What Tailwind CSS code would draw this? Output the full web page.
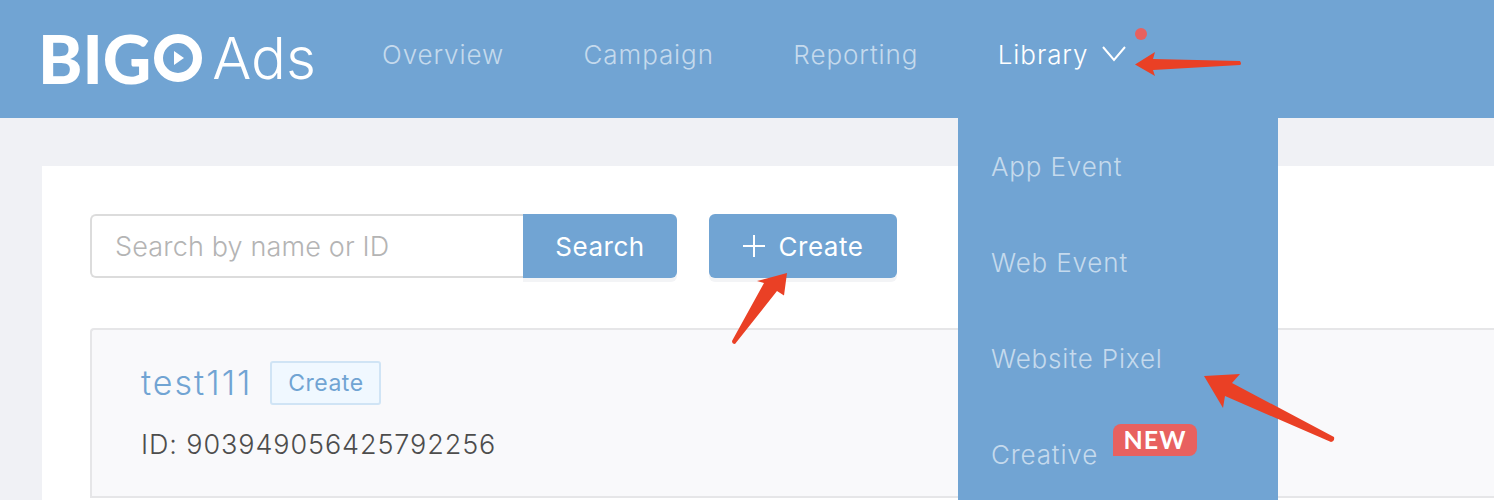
<!DOCTYPE html>
<html lang="en">
<head>
  <meta charset="UTF-8" />
  <title>BIGO Ads</title>
  <script src="https://cdn.jsdelivr.net/npm/@tailwindcss/browser@4"></script>
</head>
<body class="relative h-[500px] overflow-hidden bg-[#f0f1f5] font-['Inter',sans-serif] text-[#4d4d4d]">

  <!-- header -->
  <header class="flex h-[118px] items-center bg-[#71a4d3] pl-[42px] text-[26px] tracking-[0.9px] text-white/60">
    <div class="flex w-[340px] shrink-0 items-center pb-[2px] text-white">
      <span class="ml-[-4px] font-['Lato',sans-serif] text-[67px] leading-none font-black tracking-[0px]">BIG</span>
      <svg class="ml-[3px] h-[48px] w-[48px]" viewBox="0 0 48 48">
        <circle cx="24" cy="24" r="19.5" fill="none" stroke="#fff" stroke-width="9" />
        <path d="M20 17l10 7-10 7z" fill="#fff" />
      </svg>
      <span class="ml-[10px] text-[58px] leading-none font-light tracking-[0px]">Ads</span>
    </div>
    <nav class="flex items-center gap-[79.5px] pb-[10px] font-light">
      <a>Overview</a>
      <a>Campaign</a>
      <a>Reporting</a>
      <a class="flex items-center text-white">
        Library
        <svg class="ml-[14px] h-[16px] w-[24px]" viewBox="0 0 24 16" fill="none" stroke="#fff" stroke-width="2"><path d="M1 1l11 13L23 1" /></svg>
      </a>
    </nav>
  </header>

  <!-- content -->
  <main class="ml-[42px] mt-[48px] h-[334px] bg-white pl-[48px] pt-[48px]">
    <div class="flex items-start">
      <div class="flex h-[64px] w-[433px] items-center rounded-l-[6px] border-2 border-r-0 border-[#dcdcdc] pl-[23px] pt-[3px] text-[27px] font-light tracking-[0.15px] text-[#b4b4b4]">Search by name or ID</div>
      <button class="h-[64px] w-[154px] rounded-r-[6px] bg-[#71a4d3] text-[26px] tracking-[0.5px] text-white shadow-[0_4px_0_#f3f4f6]">Search</button>
      <button class="ml-[32px] flex h-[64px] w-[188px] items-center justify-center gap-[14px] rounded-[6px] bg-[#71a4d3] text-[26px] tracking-[0.5px] text-white shadow-[0_4px_0_#f3f4f6]">
        <svg class="h-[22px] w-[22px]" viewBox="0 0 22 22" stroke="#fff" stroke-width="2"><path d="M11 0v22M0 11h22" /></svg>
        Create
      </button>
    </div>

    <div class="mt-[50px] h-[170px] rounded-tl-[4px] border-t-2 border-b-2 border-l-2 border-[#e6e6e8] bg-[#f9f9fb] pl-[49px] pt-[31px]">
      <div class="flex items-center">
        <span class="text-[34px] leading-[44px] font-light tracking-[2px] text-[#71a4d3]">test111</span>
        <span class="ml-[18px] flex h-[44px] w-[111px] items-center justify-center rounded-[3px] border-2 border-[#d0e4f5] bg-[#f0f8ff] text-[23px] tracking-[0.5px] text-[#71a4d3]">Create</span>
      </div>
      <p class="mt-[22px] text-[27px] leading-[36px] font-light tracking-[0.9px]">ID: 903949056425792256</p>
    </div>
  </main>

  <!-- library dropdown -->
  <ul class="absolute left-[958px] top-[118px] h-[382px] w-[320px] bg-[#71a4d3] pl-[33px] text-[26px] font-light tracking-[0.85px] text-white/60">
    <li class="flex h-[96px] items-center">App Event</li>
    <li class="flex h-[96px] items-center">Web Event</li>
    <li class="flex h-[96px] items-center">Website Pixel</li>
    <li class="relative flex h-[94px] items-center pt-[2px]">
      Creative
      <span class="absolute left-[122px] top-[18px] flex h-[32px] w-[84px] items-center justify-center rounded-[8px] rounded-bl-none bg-[#e8615f] font-['Lato',sans-serif] text-[25px] font-bold tracking-[1px] text-white">NEW</span>
    </li>
  </ul>

  <!-- notification dot -->
  <span class="absolute left-[1135px] top-[28px] h-[12px] w-[12px] rounded-full bg-[#e8615f]"></span>

  <!-- red annotation arrows -->
  <svg class="absolute left-0 top-0 h-[500px] w-[1494px]" viewBox="0 0 1494 500" fill="#ea4025">
    <path d="M1135 64.500L1155 52 L1153 59 L1240 61 Q1242 64 1240 65 L1153 70 L1155 76z" />
    <path d="M787 273L784 295.500 L777 291 L735 344 Q732 344 732 341 L764 283 L757 281z" />
    <path d="M1204 376L1240 374 L1232 383 L1334 437 Q1335 441 1331 442 L1225 396 L1223 408z" />
  </svg>
</body>
</html>
